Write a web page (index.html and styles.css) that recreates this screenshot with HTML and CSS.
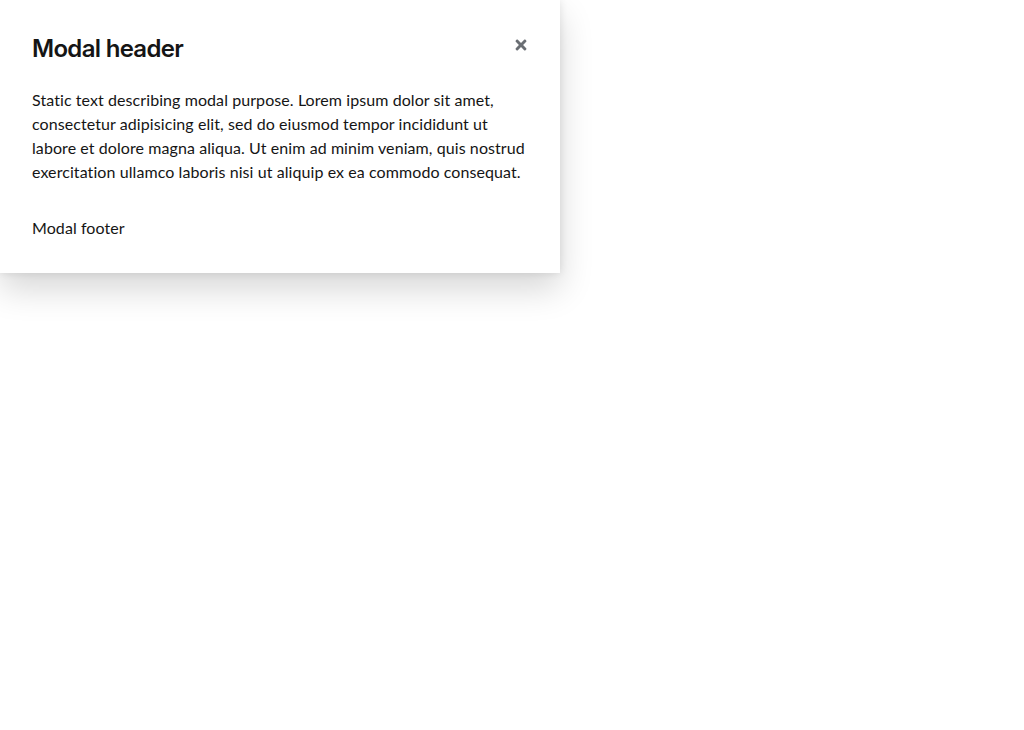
FILE: index.html
```html
<!DOCTYPE html>
<html lang="en">
<head>
<meta charset="utf-8">
<title>Modal</title>
<link rel="stylesheet" href="styles.css">
</head>
<body>
<div class="modal-box" role="dialog" aria-labelledby="modal-title">
  <header class="modal-header">
    <h1 class="modal-title" id="modal-title">Modal header</h1>
    <button class="modal-close" aria-label="Close">
      <svg viewBox="0 0 352 512" width="12" height="16" aria-hidden="true"><path d="M242.72 256l100.07-100.07c12.28-12.28 12.28-32.19 0-44.48l-22.240-22.24c-12.28-12.28-32.19-12.28-44.48 0L176 189.28 75.93 89.21c-12.28-12.28-32.19-12.28-44.48 0L9.21 111.45c-12.28 12.28-12.28 32.19 0 44.48L109.28 256 9.21 356.07c-12.28 12.28-12.28 32.19 0 44.48l22.24 22.24c12.28 12.28 32.2 12.28 44.48 0L176 322.72l100.07 100.07c12.28 12.28 32.2 12.28 44.48 0l22.24-22.24c12.28-12.28 12.28-32.19 0-44.48L242.72 256z" fill="currentColor"/></svg>
    </button>
  </header>
  <div class="modal-body">Static text describing modal purpose. Lorem ipsum dolor sit amet, consectetur adipisicing elit, sed do eiusmod tempor incididunt ut labore et dolore magna aliqua. Ut enim ad minim veniam, quis nostrud exercitation ullamco laboris nisi ut aliquip ex ea commodo consequat.</div>
  <footer class="modal-footer">Modal footer</footer>
</div>
</body>
</html>
```
FILE: styles.css
```css
html, body {
  margin: 0;
  padding: 0;
  background: #ffffff;
}
html {
  min-height: 100%;
}
body {
  min-height: 730px;
  font-family: "Lato", "Liberation Sans", sans-serif;
  color: #151515;
  font-size: 16px;
  line-height: 24px;
}
.modal-box {
  width: 560px;
  box-sizing: border-box;
  background: #ffffff;
  padding: 33px 32px 33px 32px;
  box-shadow: 0 16px 32px 0 rgba(3, 3, 3, 0.16), 0 0 8px 0 rgba(3, 3, 3, 0.1);
}
.modal-header {
  display: flex;
  align-items: flex-start;
  justify-content: space-between;
}
.modal-title {
  margin: 0;
  font-family: "Inter", "Lato", sans-serif;
  font-size: 24px;
  line-height: 31px;
  font-weight: 600;
  letter-spacing: -0.7px;
  color: #151515;
}
.modal-close {
  border: 0;
  background: transparent;
  padding: 0;
  margin: 4px 0 0 0;
  width: 14px;
  height: 16px;
  color: #6a6e73;
  display: flex;
  align-items: center;
  justify-content: center;
  cursor: pointer;
}
.modal-body {
  margin-top: 24px;
  letter-spacing: 0.08px;
}
.modal-footer {
  margin-top: 32px;
  letter-spacing: 0.08px;
}
```
